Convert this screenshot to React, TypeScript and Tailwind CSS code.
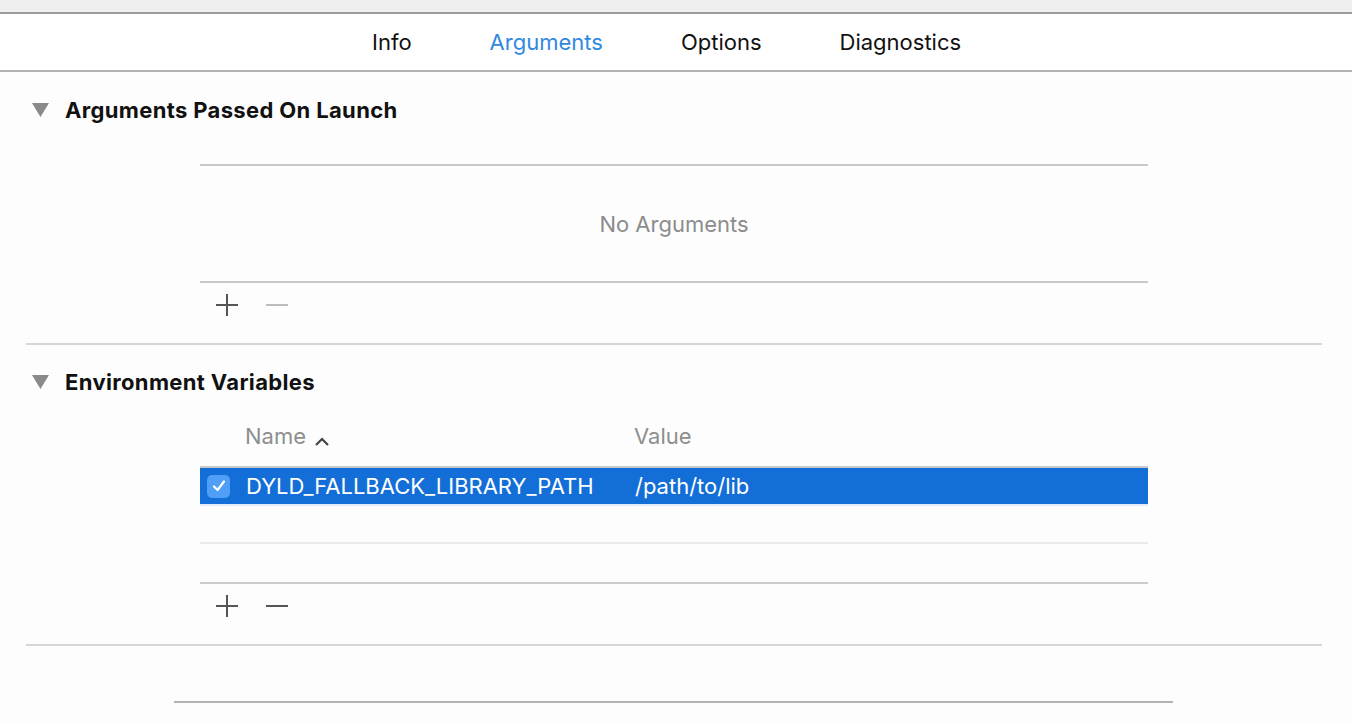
import React from "react";

const font = { fontFamily: "Inter, 'Noto Sans', sans-serif" };

function Triangle() {
  return (
    <svg width="17" height="14" viewBox="0 0 17 14" className="shrink-0">
      <path d="M0 0H17L8.5 14Z" fill="#8a8a8a" />
    </svg>
  );
}

function PlusMinus({ minusEnabled }: { minusEnabled: boolean }) {
  return (
    <div className="h-[44px] flex items-center pl-[16px] gap-[28px]">
      <svg width="22" height="22" viewBox="0 0 22 22">
        <path d="M11 0V22M0 11H22" stroke="#555" strokeWidth="2" />
      </svg>
      <svg width="22" height="22" viewBox="0 0 22 22">
        <path d="M0 11H22" stroke={minusEnabled ? "#555" : "#bdbdbd"} strokeWidth="2" />
      </svg>
    </div>
  );
}

function SectionTitle({ children }: { children: React.ReactNode }) {
  return (
    <div className="h-[28px] flex items-center pl-[32px] gap-[16px]">
      <Triangle />
      <span className="text-[22px] font-bold text-[#111] leading-none tracking-[0.35px]">{children}</span>
    </div>
  );
}

export default function App() {
  const tabs = ["Info", "Arguments", "Options", "Diagnostics"];
  return (
    <div className="w-[1352px] h-[724px] bg-[#fdfdfd] overflow-hidden flex flex-col" style={font}>
      <div className="h-[12px] bg-[#efefef]" />
      <div className="h-[2px] bg-[#9c9c9c]" />
      <div className="h-[56px] bg-white flex items-center pl-[372px] gap-[78px] text-[22px]">
        {tabs.map((t) => (
          <span key={t} className={t === "Arguments" ? "text-[#3089e0]" : "text-[#111]"}>
            {t}
          </span>
        ))}
      </div>
      <div className="h-[2px] bg-[#b3b3b3]" />

      {/* Arguments Passed On Launch */}
      <div className="mt-[24px]">
        <SectionTitle>Arguments Passed On Launch</SectionTitle>
      </div>
      <div className="ml-[200px] w-[948px] mt-[40px]">
        <div className="h-[2px] bg-[#c9c9c9]" />
        <div className="h-[115px] flex items-center justify-center text-[22px] text-[#8c8c8c] pt-[2px]">
          No Arguments
        </div>
        <div className="h-[2px] bg-[#c9c9c9]" />
        <PlusMinus minusEnabled={false} />
      </div>
      <div className="ml-[26px] w-[1296px] h-[2px] bg-[#d6d6d6] mt-[16px]" />

      {/* Environment Variables */}
      <div className="mt-[23px]">
        <SectionTitle>Environment Variables</SectionTitle>
      </div>
      <div className="ml-[200px] w-[948px] mt-[24px]">
        <div className="h-[32px] flex items-center text-[22px] text-[#8e8e8e]">
          <div className="w-[434px] pl-[45px] flex items-center gap-[9px]">
            <span>Name</span>
            <svg width="14" height="9" viewBox="0 0 14 9" className="mt-[10px]">
              <path d="M1 8L7 2L13 8" fill="none" stroke="#444" strokeWidth="2.2" />
            </svg>
          </div>
          <span>Value</span>
        </div>
        <div className="h-[2px] bg-[#c9c9c9] mt-[14px]" />
        <div className="h-[36px] bg-[#136fd7] flex items-center text-[22px] text-white">
          <div className="w-[46px] pl-[7px]">
            <div className="w-[23px] h-[23px] rounded-[5px] bg-[#4e9ff5] flex items-center justify-center">
              <svg width="14" height="12" viewBox="0 0 14 12">
                <path d="M2 6.5L5.5 10L12 1.5" fill="none" stroke="white" strokeWidth="2.2" strokeLinecap="round" strokeLinejoin="round" />
              </svg>
            </div>
          </div>
          <div className="w-[389px]">DYLD_FALLBACK_LIBRARY_PATH</div>
          <span>/path/to/lib</span>
        </div>
        <div className="h-[2px] bg-[#e3ecf8]" />
        <div className="h-[36px]" />
        <div className="h-[2px] bg-[#ebebeb]" />
        <div className="h-[38px]" />
        <div className="h-[2px] bg-[#cbcbcb]" />
        <PlusMinus minusEnabled={true} />
      </div>
      <div className="ml-[26px] w-[1296px] h-[2px] bg-[#d6d6d6] mt-[16px]" />

      <div className="ml-[174px] w-[999px] h-[2px] bg-[#b3b3b3] mt-[55px]" />
    </div>
  );
}
